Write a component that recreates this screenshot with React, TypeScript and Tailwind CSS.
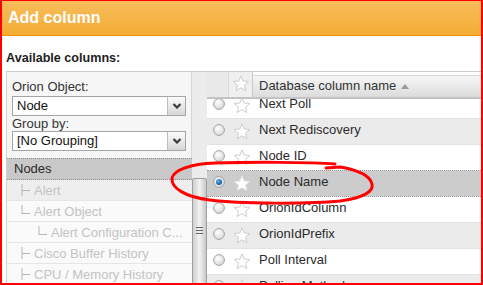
import React from "react";

const Star = ({ filled = false }: { filled?: boolean }) => (
  <svg width="18" height="17" viewBox="0 0 18 17" className="shrink-0">
    <path
      d="M9 0.8 L11.17 6.01 L16.8 6.47 L12.52 10.14 L13.82 15.63 L9 12.7 L4.18 15.63 L5.48 10.14 L1.2 6.47 L6.83 6.01 Z"
      fill="#ffffff"
      stroke={filled ? "#e2e2e2" : "#cdcdcd"}
      strokeWidth="1"
      strokeLinejoin="round"
    />
  </svg>
);

const Radio = ({ checked = false }: { checked?: boolean }) => (
  <svg width="12" height="12" viewBox="0 0 12 12" className="shrink-0">
    <defs>
      <radialGradient id={checked ? "rg1" : "rg0"} cx="0.4" cy="0.35" r="0.7">
        <stop offset="0" stopColor="#ffffff" />
        <stop offset="1" stopColor="#d4d4d4" />
      </radialGradient>
      <radialGradient id="blue" cx="0.4" cy="0.35" r="0.7">
        <stop offset="0" stopColor="#5fb2f0" />
        <stop offset="1" stopColor="#0b4f8f" />
      </radialGradient>
    </defs>
    <circle cx="6" cy="6" r="5.4" fill={`url(#${checked ? "rg1" : "rg0"})`} stroke="#a3a3a3" strokeWidth="1" />
    {checked && <circle cx="6" cy="6" r="3" fill="url(#blue)" />}
  </svg>
);

const Chevron = () => (
  <svg width="10" height="6" viewBox="0 0 10 6">
    <path d="M1.5 1 L5 4.5 L8.5 1" fill="none" stroke="#3a3a3a" strokeWidth="2.2" />
  </svg>
);

const Select = ({ value }: { value: string }) => (
  <div className="flex h-[20px] w-[174px] border border-[#a5a5a5] bg-white">
    <div className="flex-1 pl-[4px] pt-[1px] text-[#111]">{value}</div>
    <div className="flex w-[18px] items-center justify-center border-l border-[#bdbdbd] bg-gradient-to-b from-[#fbfbfb] to-[#d6d6d6]">
      <Chevron />
    </div>
  </div>
);

const Connector = ({ kind }: { kind: "tee" | "ell" }) => (
  <svg width="10" height="14" viewBox="0 0 10 14" className="shrink-0">
    {kind === "tee" ? (
      <>
        <line x1="1" y1="0" x2="1" y2="12" stroke="#b6b6b6" strokeWidth="1" />
        <line x1="1" y1="6.5" x2="9" y2="6.5" stroke="#b6b6b6" strokeWidth="1" />
      </>
    ) : (
      <>
        <line x1="1" y1="0" x2="1" y2="9" stroke="#b6b6b6" strokeWidth="1" />
        <line x1="1" y1="8.5" x2="9" y2="8.5" stroke="#b6b6b6" strokeWidth="1" />
      </>
    )}
  </svg>
);

const treeItems: { label: string; kind: "tee" | "ell"; indent: number; hover?: boolean }[] = [
  { label: "Alert", kind: "tee", indent: 0, hover: true },
  { label: "Alert Object", kind: "ell", indent: 0 },
  { label: "Alert Configuration C...", kind: "ell", indent: 1 },
  { label: "Cisco Buffer History", kind: "tee", indent: 0 },
  { label: "CPU / Memory History", kind: "tee", indent: 0 },
];

const rows: { label: string; alt: boolean; selected?: boolean }[] = [
  { label: "Next Poll", alt: false },
  { label: "Next Rediscovery", alt: true },
  { label: "Node ID", alt: false },
  { label: "Node Name", alt: false, selected: true },
  { label: "OrionIdColumn", alt: false },
  { label: "OrionIdPrefix", alt: true },
  { label: "Poll Interval", alt: false },
  { label: "Polling Method", alt: true },
];

export default function App() {
  return (
    <div className="relative h-[285px] w-[483px] overflow-hidden bg-white font-['Liberation_Sans',Arial,sans-serif] text-[13px] leading-[15px] text-[#222]">
      {/* Title bar */}
      <div className="h-[36px] border-b border-[#ee9500] bg-gradient-to-b from-[#f7bd5b] to-[#f4ac35] pl-[8px] pt-[9px] text-[16px] font-bold leading-[18px] text-white">
        Add column
      </div>

      <div className="h-[35px] pl-[6px] pt-[15px] text-[12.6px] font-bold leading-[14px] text-[#1e1e1e]">
        Available columns:
      </div>

      {/* Panel */}
      <div className="ml-[6px] flex h-[214px] border-t border-[#cdcdcd]">
        {/* Left column */}
        <div className="flex w-[186px] flex-col border-l border-[#d0d0d0]">
          <div className="h-[87px] border-r border-[#d6d6d6] bg-[#f6f6f6] pl-[5px] pt-[7px]">
            <div className="text-[#333]">Orion Object:</div>
            <div className="mt-[2px]">
              <Select value="Node" />
            </div>
            <div className="text-[#333]">Group by:</div>
            <Select value="[No Grouping]" />
          </div>
          <div className="flex h-[22px] border-y border-dotted border-[#8e8e8e] bg-[#c9c9c9] pl-[7px] pt-[2px] text-[#2a2a2a]">
            Nodes
          </div>
          {treeItems.map((it) => (
            <div
              key={it.label}
              className={`flex h-[21px] shrink-0 items-start border-b border-[#e6e6e6] pt-[4px] text-[#c3c3c3] ${
                it.hover ? "bg-[#eeeeee]" : "bg-[#fafafa]"
              } ${it.indent ? "pl-[31px]" : "pl-[14px]"}`}
            >
              <Connector kind={it.kind} />
              <span className="-mt-[1px] ml-[3px] whitespace-nowrap">{it.label}</span>
            </div>
          ))}
        </div>

        {/* Scrollbar */}
        <div className="flex w-[15px] flex-col bg-[#ececec]">
          <div className="h-[106px]" />
          <div className="flex flex-1 flex-col items-center rounded-t-[2px] border border-[#9f9f9f] bg-gradient-to-r from-[#cfcfcf] via-[#f3f3f3] to-[#c8c8c8] pt-[48px]">
            <div className="h-[1px] w-[7px] bg-[#666]" />
            <div className="mt-[2px] h-[1px] w-[7px] bg-[#666]" />
            <div className="mt-[2px] h-[1px] w-[7px] bg-[#666]" />
          </div>
        </div>

        {/* Right table */}
        <div className="flex flex-1 flex-col overflow-hidden">
          <div className="flex h-[27px] shrink-0 border-b-2 border-[#c3c3c3]">
            <div className="w-[21px] bg-[#e9e9e9]" />
            <div className="flex w-[25px] justify-center border-x border-l-[#dcdcdc] border-r-[#c8c8c8] bg-[#efefef] pt-[3px]">
              <Star />
            </div>
            <div className="mt-[3px] flex-1 border-t border-[#d6d6d6] bg-gradient-to-b from-[#f6f6f6] to-[#dcdcdc] pl-[6px] pt-[2px] text-[#333]">
              <span className="inline-flex items-center whitespace-nowrap">
                Database column name
                <svg width="8" height="5" viewBox="0 0 8 5" className="ml-[5px] mt-[2px]">
                  <path d="M0 5 L4 0 L8 5 Z" fill="#9a9a9a" />
                </svg>
              </span>
            </div>
          </div>
          <div className="flex-1 overflow-hidden">
            <div className="-mt-[6px]">
              {rows.map((r) => (
                <div
                  key={r.label}
                  className={`relative flex h-[26px] items-start border-b border-[#e2e2e2] pl-[6px] ${
                    r.selected ? "bg-[#cccccc]" : r.alt ? "bg-[#ebebeb]" : "bg-white"
                  }`}
                >
                  {r.selected && (
                    <div className="absolute inset-x-0 -top-[1px] h-[27px] border-y border-dotted border-[#979797]" />
                  )}
                  <div className="mt-[5px]">
                    <Radio checked={r.selected} />
                  </div>
                  <div className="ml-[8px] mt-[4px]">
                    <Star filled={r.selected} />
                  </div>
                  <div className="ml-[8px] mt-[3px] whitespace-nowrap text-[#2b2b2b]">{r.label}</div>
                </div>
              ))}
            </div>
          </div>
        </div>
      </div>

      {/* Red annotation ellipse */}
      <svg className="pointer-events-none absolute left-0 top-0" width="483" height="285" viewBox="0 0 483 285">
        <path
          d="M335 164 C310 162 250 162 215 163 C190 164 174 170 172 178 C171 188 185 197 210 200 C240 204 310 204 340 201 C362 198 374 192 372 184 C370 176 358 170 340 167 L326 168"
          fill="none"
          stroke="#ff0000"
          strokeWidth="3"
          strokeLinecap="round"
          strokeLinejoin="round"
        />
      </svg>

      {/* Red annotation frame */}
      <div className="pointer-events-none absolute inset-0 border-x-2 border-b-2 border-t border-[#ff0000]" />
    </div>
  );
}
